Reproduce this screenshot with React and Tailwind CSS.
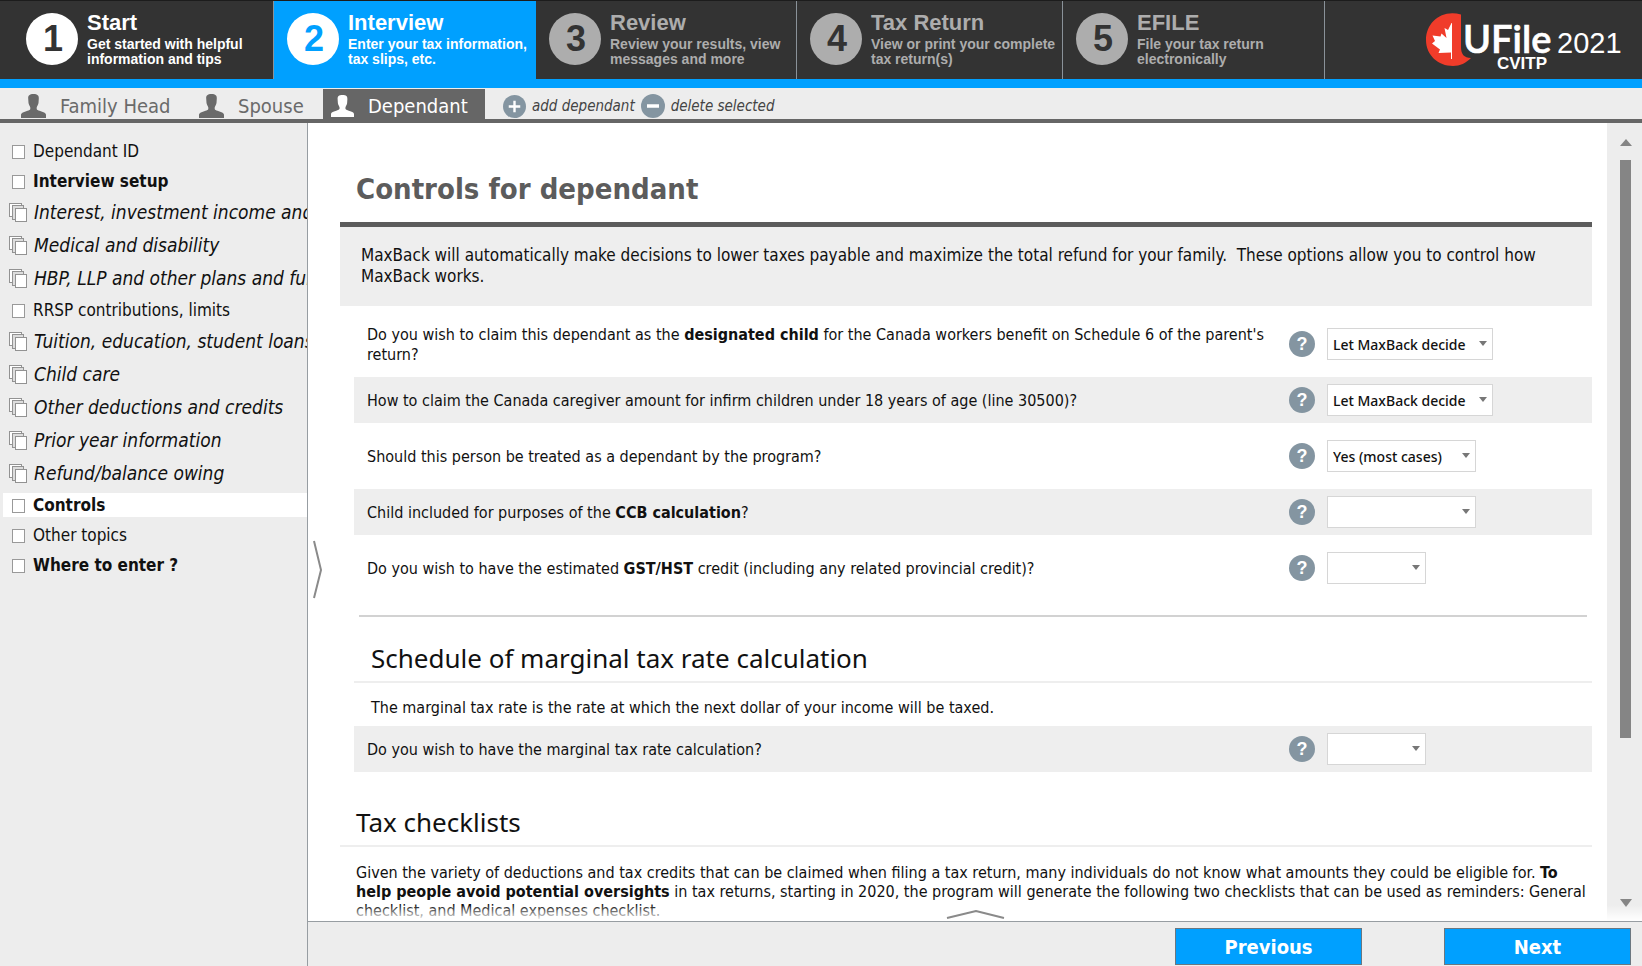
const steps = [
  { n: 1, title: 'Start', a: 'Get started with helpful', b: 'information and tips', box: 'w-[274px] pl-[26px] bg-[#333333] text-white border-[#8a9299]', dot: 'bg-white text-[#333333]' },
  { n: 2, title: 'Interview', a: 'Enter your tax information,', b: 'tax slips, etc.', box: 'w-[262px] pl-[13px] bg-[#00a0ff] text-white border-[#00a0ff]', dot: 'bg-white text-[#00a0ff]' },
  { n: 3, title: 'Review', a: 'Review your results, view', b: 'messages and more', box: 'w-[261px] pl-[13px] bg-[#333333] text-[#adadad] border-[#8a9299]', dot: 'bg-[#adadad] text-[#333333]' },
  { n: 4, title: 'Tax Return', a: 'View or print your complete', b: 'tax return(s)', box: 'w-[266px] pl-[13px] bg-[#333333] text-[#adadad] border-[#8a9299]', dot: 'bg-[#adadad] text-[#333333]' },
  { n: 5, title: 'EFILE', a: 'File your tax return', b: 'electronically', box: 'w-[262px] pl-[13px] bg-[#333333] text-[#adadad] border-[#8a9299]', dot: 'bg-[#adadad] text-[#333333]' },
];

const topics = [
  { label: 'Dependant ID', kind: 'plain' },
  { label: 'Interview setup', kind: 'bold' },
  { label: 'Interest, investment income and expenses', kind: 'group' },
  { label: 'Medical and disability', kind: 'group' },
  { label: 'HBP, LLP and other plans and funds', kind: 'group' },
  { label: 'RRSP contributions, limits', kind: 'plain' },
  { label: 'Tuition, education, student loans', kind: 'group' },
  { label: 'Child care', kind: 'group' },
  { label: 'Other deductions and credits', kind: 'group' },
  { label: 'Prior year information', kind: 'group' },
  { label: 'Refund/balance owing', kind: 'group' },
  { label: 'Controls', kind: 'bold', selected: true },
  { label: 'Other topics', kind: 'plain' },
  { label: 'Where to enter ?', kind: 'bold' },
];

const labelStyle = {
  plain: 'pt-[2px] text-[17px]',
  bold: 'pt-[2px] text-[17px] font-bold',
  group: 'pl-px text-[19px] italic',
};

function Person({ className }) {
  return (
    <svg viewBox="0 0 25 24" className={className} fill="currentColor" preserveAspectRatio="none" aria-hidden="true">
      <path d="M12.500 0C8.500 0 7 1.500 7.200 4.500L7.500 9C7.800 11 9 12 9.300 13.500V15C9 16 8 16.300 6.500 16.800L2.500 18.300C0.800 19 0 19.800 0 21V24H25V21C25 19.800 24.200 19 22.500 18.300L18.500 16.800C17 16.300 16 16 15.700 15V13.500C16 12 17.200 11 17.500 9L17.800 4.500C18 1.500 16.500 0 12.500 0Z" />
    </svg>
  );
}

function SheetIcon() {
  return (
    <svg width="18" height="20" viewBox="0 0 18 20" className="shrink-0" aria-hidden="true">
      <rect x="3.500" y="4.500" width="12" height="13" fill="#fff" stroke="#999" />
    </svg>
  );
}

function StackIcon() {
  return (
    <svg width="18" height="20" viewBox="0 0 18 20" className="shrink-0" fill="#fff" stroke="#929292" aria-hidden="true">
      <rect x="0.500" y="0.500" width="12" height="13" />
      <rect x="3.500" y="2.500" width="11" height="14" fill="#ddd" />
      <rect x="6.500" y="5.500" width="11" height="13" />
    </svg>
  );
}

function Logo() {
  return (
    <svg width="200" height="64" viewBox="0 0 200 64" role="img" aria-label="UFile CVITP 2021">
      <path d="M35 1.500C16 -4 0 9 0 27C0 42 12 53 27 53C34 53 40 50 45 45C38 45 35 41 35 34Z" fill="#f03c2a" />
      <path d="M25.500 10L22 17L18.500 15L20.500 25L15.500 20.500L14.500 23.500L6.500 22.500L9 28L6 30.500L14 36.500L12.500 40L25 39.500V46H26V10Z" fill="#fff" />
      <text x="37" y="40" fill="#fff" stroke="#fff" strokeWidth="0.600" className="font-['Lato'] text-[38px] font-semibold">UFile</text>
      <text x="71" y="56" fill="#fff" className="font-['Liberation_Sans'] text-[17px] font-bold">CVITP</text>
      <text x="131" y="40" fill="#fff" className="font-['Liberation_Sans'] text-[29px]">2021</text>
    </svg>
  );
}

function Question({ id, children, width, value, shaded }) {
  return (
    <div className={`flex min-h-[46px] items-center pl-[13px] ${shaded ? 'bg-[#eeeeee]' : ''}`}>
      <label htmlFor={id} className="flex-1 pt-[2px] pr-4 text-base leading-5">{children}</label>
      <div className="flex w-[303px] items-center gap-3">
        <button type="button" aria-label="Help" className="flex size-[26px] shrink-0 items-center justify-center rounded-full bg-[#8495a1] font-['Liberation_Sans'] text-lg leading-none font-bold text-white">?</button>
        <div className="relative">
          <select id={id} defaultValue={value} className={`block h-8 appearance-none rounded-none border border-[#d6d6d6] bg-white pt-px pl-[5px] font-['Noto_Sans'] text-sm font-medium ${width}`}>
            <option>{value}</option>
          </select>
          <svg width="8" height="5" viewBox="0 0 8 5" className="pointer-events-none absolute top-[13px] right-[6px]" aria-hidden="true">
            <path d="M0 0H8L4 5Z" fill="#777" />
          </svg>
        </div>
      </div>
    </div>
  );
}

export default function App() {
  return (
    <div className="flex h-screen flex-col overflow-hidden bg-[#ededed] font-['DejaVu_Sans_Condensed','Noto_Sans',sans-serif] text-[#111]">
      <header className="flex h-[88px] shrink-0 border-t border-b-[9px] border-t-[#1c1c1c] border-b-[#00a0ff] bg-[#333333] font-['Liberation_Sans',sans-serif]">
        <nav className="flex">
          {steps.map((s) => (
            <a key={s.n} href={`#step-${s.n}`} className={`flex gap-[9px] border-r pt-[10px] font-bold ${s.box}`}>
              <span className={`mt-[2px] flex size-[52px] shrink-0 items-center justify-center rounded-full pl-[2px] text-4xl ${s.dot}`}>{s.n}</span>
              <span className="flex flex-col whitespace-nowrap text-sm leading-[15px]">
                <span className="mb-[2px] text-[22px] leading-6">{s.title}</span>
                <span>{s.a}</span>
                <span>{s.b}</span>
              </span>
            </a>
          ))}
        </nav>
        <div className="ml-auto pt-3 pr-4"><Logo /></div>
      </header>

      <div className="flex h-[35px] shrink-0 items-stretch border-b-4 border-[#666666] pt-px text-xl text-[#6a6a6a]">
        <button type="button" className="flex w-[177px] items-center gap-[14px] pt-1 pl-[21px] whitespace-nowrap"><Person className="h-6 w-[25px]" />Family Head</button>
        <button type="button" className="flex w-[146px] items-center gap-[14px] pt-1 pl-[22px] whitespace-nowrap"><Person className="h-6 w-[25px]" />Spouse</button>
        <button type="button" className="flex w-[162px] items-center gap-[14px] bg-[#666666] pt-1 pl-2 whitespace-nowrap text-white"><Person className="h-[22px] w-[23px]" />Dependant</button>
        <div className="flex items-center gap-[6px] pt-1 pl-[18px] text-[15px] text-[#444] italic">
          <button type="button" className="flex items-center gap-[6px]">
            <svg width="23" height="23" viewBox="0 0 24 24" aria-hidden="true"><circle cx="12" cy="12" r="12" fill="#8495a1" /><path d="M12 6V18M6 12H18" stroke="#fff" strokeWidth="2.500" /></svg>
            add dependant
          </button>
          <button type="button" className="flex items-center gap-[6px]">
            <svg width="24" height="24" viewBox="0 0 24 24" aria-hidden="true"><circle cx="12" cy="12" r="12" fill="#8495a1" /><path d="M6 12H18" stroke="#fff" strokeWidth="3.500" /></svg>
            delete selected
          </button>
        </div>
      </div>

      <div className="flex min-h-0 flex-1">
        <nav className="w-[308px] shrink-0 overflow-hidden border-r border-[#979da2] pt-[13px] pl-[3px]">
          {topics.map((t) => (
            <div key={t.label} className={t.kind === 'group' ? 'flex h-[33px] items-center' : 'flex h-[30px] items-center'}>
              <a href="#topic" className={`flex h-6 w-full items-center gap-[6px] pl-[6px] whitespace-nowrap ${t.selected ? 'bg-white' : ''}`}>
                {t.kind === 'group' ? <StackIcon /> : <SheetIcon />}
                <span className={labelStyle[t.kind]}>{t.label}</span>
              </a>
            </div>
          ))}
        </nav>

        <div className="flex min-w-0 flex-1 flex-col">
          <div className="relative flex min-h-0 flex-1 bg-white">
            <button type="button" aria-label="Expand panel" className="absolute top-[417px] left-[5px]">
              <svg width="10" height="60" viewBox="0 0 10 60" fill="none" stroke="#8a8a8a" strokeWidth="2"><path d="M1 1L8 30L1 58" /></svg>
            </button>
            <main className="min-w-0 flex-1 overflow-hidden pr-[15px] pl-8">
              <h1 className="border-b-[5px] border-[#5c5c5c] pt-[46px] pb-[13px] pl-4 text-[29px] leading-10 font-bold text-[#5c5c5c]">Controls for dependant</h1>
              <p className="min-h-[79px] bg-[#eeeeee] px-[21px] pt-[18px] text-[17px] leading-[21px]">
                MaxBack will automatically make decisions to lower taxes payable and maximize the total refund for your family.&nbsp; These options allow you to control how MaxBack works.
              </p>
              <div className="ml-[14px] flex flex-col gap-[10px] pt-[15px]">
                <Question id="q1" width="w-[166px]" value="Let MaxBack decide">
                  Do you wish to claim this dependant as the <b>designated child</b> for the Canada workers benefit on Schedule 6 of the parent's return?
                </Question>
                <Question id="q2" width="w-[166px]" value="Let MaxBack decide" shaded>How to claim the Canada caregiver amount for infirm children under 18 years of age (line 30500)?</Question>
                <Question id="q3" width="w-[149px]" value="Yes (most cases)">Should this person be treated as a dependant by the program?</Question>
                <Question id="q4" width="w-[149px]" value="" shaded>Child included for purposes of the <b>CCB calculation</b>?</Question>
                <Question id="q5" width="w-[99px]" value="">Do you wish to have the estimated <b>GST/HST</b> credit (including any related provincial credit)?</Question>
              </div>
              <hr className="mt-6 mr-[5px] ml-[19px] border-t-2 border-[#d2d2d2]" />
              <section className="ml-[14px]">
                <h2 className="border-b-2 border-[#eeeeee] pt-[23px] pb-[5px] pl-[17px] font-['Noto_Sans'] text-[26px] leading-9">Schedule of marginal tax rate calculation</h2>
                <p className="pt-[15px] pb-2 pl-[17px] text-base leading-5">The marginal tax rate is the rate at which the next dollar of your income will be taxed.</p>
                <Question id="q6" width="w-[99px]" value="" shaded>Do you wish to have the marginal tax rate calculation?</Question>
              </section>
              <section>
                <h2 className="border-b-2 border-[#eeeeee] pt-8 pb-[5px] pl-4 font-['Noto_Sans'] text-[26px] leading-9">Tax checklists</h2>
                <p className="pt-4 pr-1 pl-4 text-base leading-[19px]">
                  Given the variety of deductions and tax credits that can be claimed when filing a tax return, many individuals do not know what amounts they could be eligible for. <b>To help people avoid potential oversights</b> in tax returns, starting in 2020, the program will generate the following two checklists that can be used as reminders: General checklist, and Medical expenses checklist.
                </p>
              </section>
            </main>
            <div className="flex w-[35px] shrink-0 flex-col items-center bg-[#ededed] pt-4 pb-[14px] pl-[2px]">
              <svg width="12" height="7" viewBox="0 0 12 7" aria-hidden="true"><path d="M6 0L12 7H0Z" fill="#858585" /></svg>
              <div className="mt-[14px] mb-[161px] w-[11px] flex-1 bg-[#858585]" />
              <svg width="12" height="8" viewBox="0 0 12 8" aria-hidden="true"><path d="M0 0H12L6 8Z" fill="#858585" /></svg>
            </div>
            <div className="pointer-events-none absolute inset-x-0 bottom-0 h-4 bg-linear-to-b from-white/0 to-white" />
            <button type="button" aria-label="Show more" className="absolute bottom-px left-1/2 -translate-x-1/2">
              <svg width="60" height="10" viewBox="0 0 60 10" fill="none" stroke="#8a8a8a" strokeWidth="2"><path d="M2 8L31 1L59 8" /></svg>
            </button>
          </div>
          <footer className="flex h-[45px] shrink-0 justify-end gap-[82px] border-t border-[#979da2] pt-[6px] pr-[11px]">
            <button type="button" className="h-[37px] w-[187px] border border-[#6b7780] bg-[#00a0ff] text-xl font-bold text-white">Previous</button>
            <button type="button" className="h-[37px] w-[187px] border border-[#6b7780] bg-[#00a0ff] text-xl font-bold text-white">Next</button>
          </footer>
        </div>
      </div>
    </div>
  );
}
